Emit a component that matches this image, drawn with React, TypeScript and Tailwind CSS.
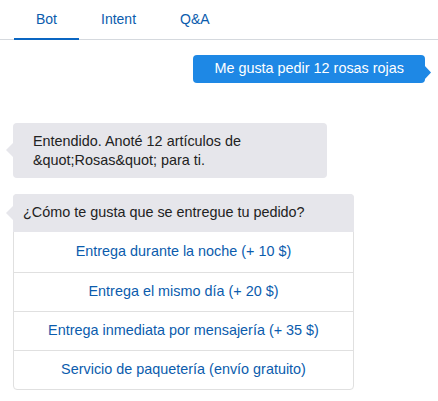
import React from "react";

const tabs = ["Bot", "Intent", "Q&A"];
const options = [
  "Entrega durante la noche (+ 10 $)",
  "Entrega el mismo día (+ 20 $)",
  "Entrega inmediata por mensajería (+ 35 $)",
  "Servicio de paquetería (envío gratuito)",
];

function LeftTail({ className, color }: { className: string; color: string }) {
  return (
    <svg className={className} width="9" height="16" viewBox="0 0 9 16">
      <polygon points="9,0 1,8 9,16" fill={color} />
    </svg>
  );
}

export default function App() {
  return (
    <div className="w-[438px] h-[401px] bg-white font-['Liberation_Sans',Arial,sans-serif] text-[14.4px] overflow-hidden">
      <div className="flex h-[40px] pl-[14px] border-b border-[#d5d9de] text-[14px]">
        {tabs.map((t, i) => (
          <div
            key={t}
            className={
              i === 0
                ? "px-[22px] flex items-center text-[#0b5cad] border-b-2 border-[#0a66c2] -mb-px pt-[1px]"
                : "px-[22px] flex items-center text-[#0b5cad] pt-[1px] pb-[2px]"
            }
          >
            {t}
          </div>
        ))}
      </div>

      <div className="px-[13px]">
        <div className="flex justify-end mt-[15px]">
          <div className="relative bg-[#1e88e5] text-white rounded-[4px] h-[28px] px-[21px] flex items-center">
            Me gusta pedir 12 rosas rojas
            <svg className="absolute -right-[7px] top-[10px]" width="8" height="15" viewBox="0 0 8 15">
              <polygon points="0,0 7,7.5 0,15" fill="#1e88e5" />
            </svg>
          </div>
        </div>

        <div className="relative mt-[40px] w-[314px] bg-[#e6e6eb] rounded-[4px] pl-[20px] pr-[10px] pt-[9px] pb-[8px] leading-[19px] text-[#222]">
          <LeftTail className="absolute -left-[8px] top-[19px]" color="#e6e6eb" />
          Entendido. Anoté 12 artículos de
          <br />
          &amp;quot;Rosas&amp;quot; para ti.
        </div>

        <div className="relative mt-[16px] w-[341px] border border-[#e0e0e0] rounded-[4px]">
          <LeftTail className="absolute -left-[9px] top-[10px]" color="#e6e6eb" />
          <div className="bg-[#e6e6eb] h-[38px] -mt-px -mx-px rounded-t-[4px] pl-[10px] flex items-center text-[#222]">
            ¿Cómo te gusta que se entregue tu pedido?
          </div>
          {options.map((o, i) => (
            <div
              key={o}
              className={
                i === 0
                  ? "h-[40px] flex items-center justify-center text-[#0b5cad]"
                  : "h-[39px] flex items-center justify-center text-[#0b5cad] border-t border-[#e0e0e0]"
              }
            >
              {o}
            </div>
          ))}
        </div>
      </div>
    </div>
  );
}
